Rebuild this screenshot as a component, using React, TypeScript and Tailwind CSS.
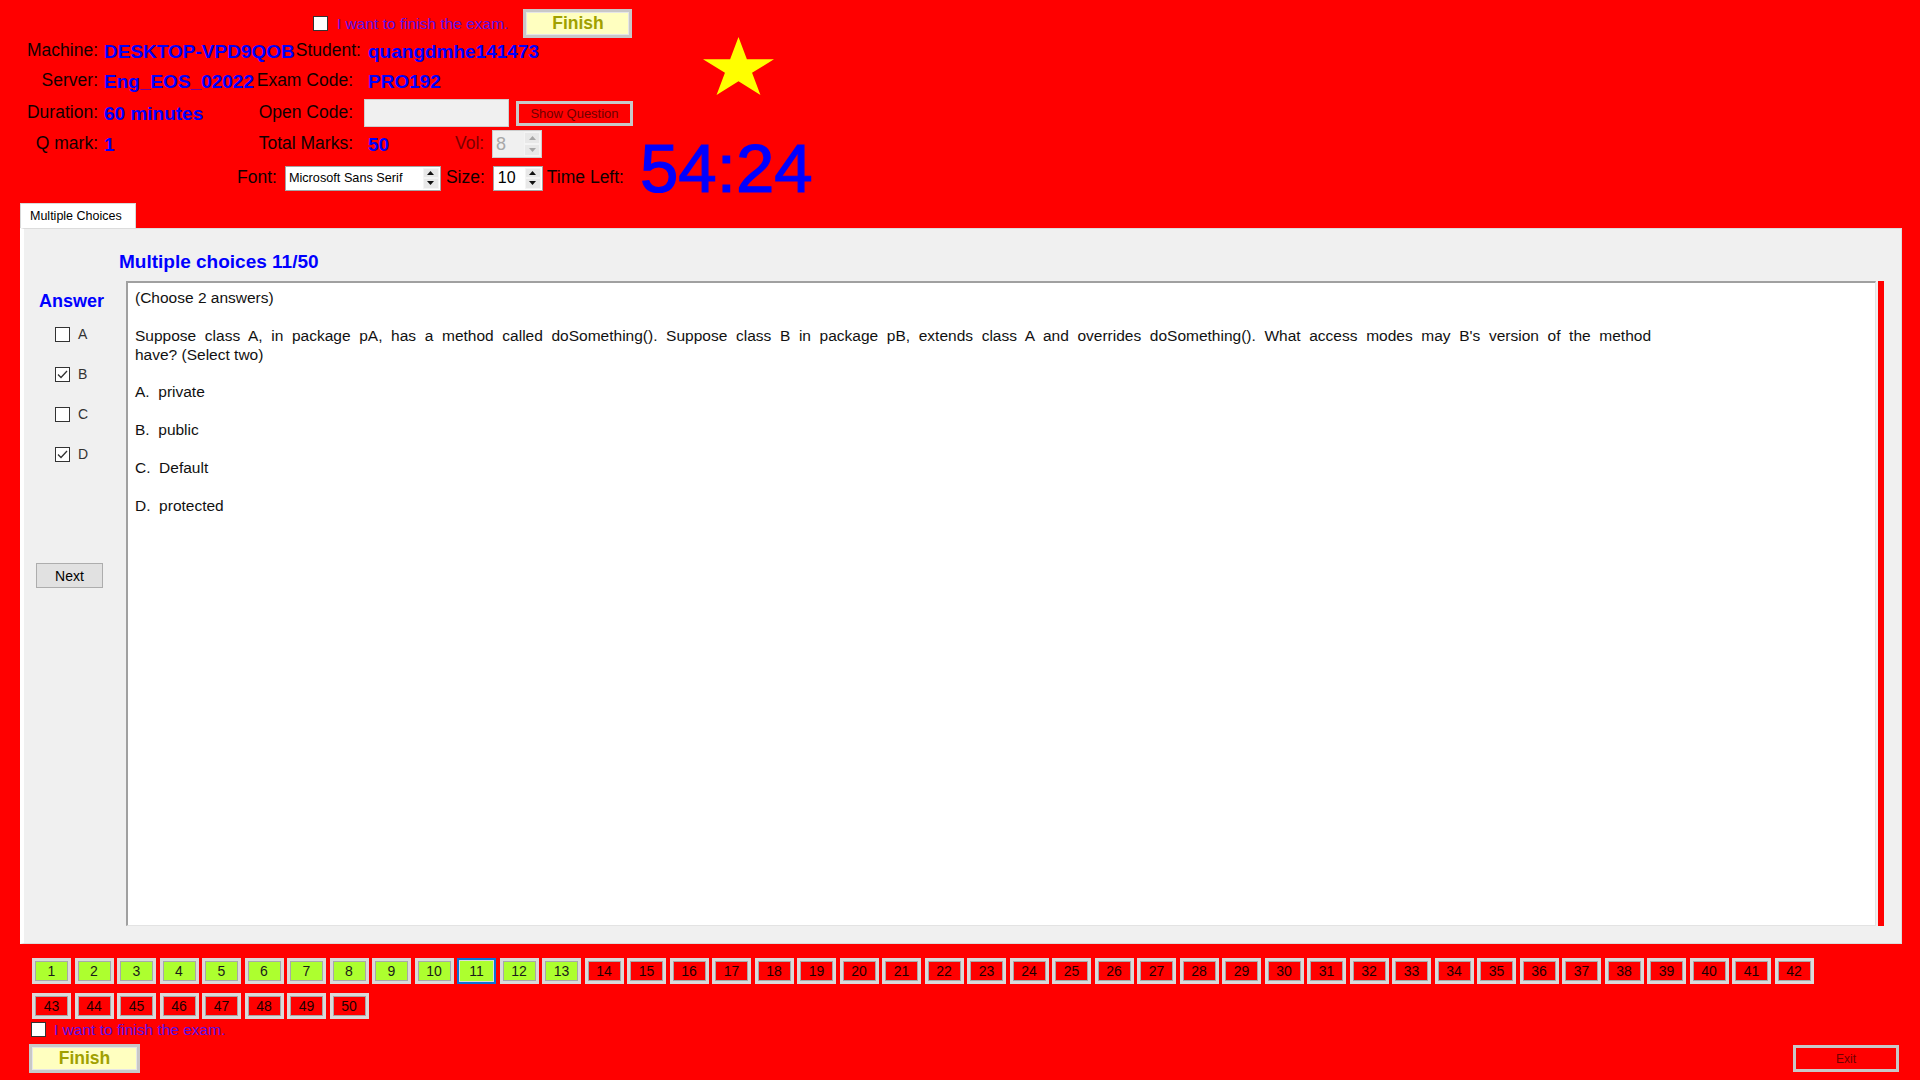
import React from "react";

const Check = ({ checked }: { checked?: boolean }) => (
  <div className="w-[15px] h-[15px] bg-white border border-[#333333] flex items-center justify-center shrink-0">
    {checked && (
      <svg width="11" height="9" viewBox="0 0 11 9">
        <path d="M1 4.5 L4 7.5 L10 1" fill="none" stroke="#333333" strokeWidth="1.3" />
      </svg>
    )}
  </div>
);

const Arrows = ({ disabled }: { disabled?: boolean }) => (
  <div className="flex flex-col w-[17px] h-full py-[1px] pr-[1px]">
    <div className="flex-1 flex items-center justify-center bg-[#e8e8e8] border border-[#f4f4f4]">
      <svg width="7" height="4" viewBox="0 0 7 4">
        <path d="M0 4 L3.5 0 L7 4Z" fill={disabled ? "#a6a6a6" : "#111111"} />
      </svg>
    </div>
    <div className="flex-1 flex items-center justify-center bg-[#e8e8e8] border border-[#f4f4f4]">
      <svg width="7" height="4" viewBox="0 0 7 4">
        <path d="M0 0 L3.5 4 L7 0Z" fill={disabled ? "#a6a6a6" : "#111111"} />
      </svg>
    </div>
  </div>
);

const Label = ({ children, cls }: { children: React.ReactNode; cls: string }) => (
  <span className={cls}>{children}</span>
);

export default function App() {
  const nums = Array.from({ length: 50 }, (_, i) => i + 1);
  const row1 = nums.slice(0, 42);
  const row2 = nums.slice(42);

  const NumBtn = ({ n }: { n: number }) => {
    const done = n <= 13;
    const current = n === 11;
    return (
      <div
        className={
          current
            ? "w-[39px] h-[26px] shrink-0 border-2 border-[#0a72d8] shadow-[inset_0_0_0_1px_#dcdcdc] bg-[#adff2f] flex items-center justify-center text-[14px] text-[#1a1a1a]"
            : done
            ? "w-[39px] h-[26px] shrink-0 border-[3px] border-[#dadada] shadow-[inset_0_0_0_1px_#a8a8a8] bg-[#adff2f] flex items-center justify-center text-[14px] text-[#1a1a1a]"
            : "w-[39px] h-[26px] shrink-0 border-[3px] border-[#dadada] shadow-[inset_0_0_0_1px_#a8a8a8] bg-[#ff0000] flex items-center justify-center text-[14px] text-[#1a0000]"
        }
      >
        {n}
      </div>
    );
  };

  const lbl = "text-[17.5px] text-[#100000] whitespace-nowrap";
  const val = "text-[19px] font-bold text-[#0000ff] whitespace-nowrap";

  return (
    <div className="w-[1920px] h-[1080px] bg-[#ff0000] overflow-hidden font-['Liberation_Sans',Arial,sans-serif] leading-none">
      {/* Header */}
      <div className="flex h-[203px]">
        <div className="w-[640px] pt-[9px] flex flex-col">
          {/* row 0 */}
          <div className="h-[29px] flex items-center pl-[313px]">
            <Check />
            <span className="ml-[9px] text-[15.5px] text-[#5a10e8] whitespace-nowrap">I want to finish the exam.</span>
            <div className="ml-[15px] w-[109px] h-[29px] border-[3px] border-[#c8c8c8] shadow-[inset_0_0_0_1px_#e6e6e6] bg-[#ffffc0] flex items-center justify-center text-[17.5px] font-bold text-[#a0a000]">
              Finish
            </div>
          </div>
          {/* row 1 */}
          <div className="h-[26px] flex items-center">
            <Label cls={`${lbl} w-[98px] text-right`}>Machine:</Label>
            <span className={`${val} ml-[6px] w-[150px]`}>DESKTOP-VPD9QOB</span>
            <Label cls={`${lbl} w-[107px] text-right`}>Student:</Label>
            <span className={`${val} ml-[7px]`}>quangdmhe141473</span>
          </div>
          {/* row 2 */}
          <div className="h-[34px] flex items-center">
            <Label cls={`${lbl} w-[98px] text-right`}>Server:</Label>
            <span className={`${val} ml-[6px] w-[150px]`}>Eng_EOS_02022</span>
            <Label cls={`${lbl} w-[99px] text-right`}>Exam Code:</Label>
            <span className={`${val} ml-[15px]`}>PRO192</span>
          </div>
          {/* row 3 */}
          <div className="h-[30px] flex items-center">
            <Label cls={`${lbl} w-[98px] text-right`}>Duration:</Label>
            <span className={`${val} ml-[6px] w-[150px]`}>60 minutes</span>
            <Label cls={`${lbl} w-[99px] text-right`}>Open Code:</Label>
            <div className="ml-[11px] w-[145px] h-[28px] bg-[#f0f0f0] border border-[#cfcfcf]" />
            <div className="ml-[7px] w-[117px] h-[25px] border-[3px] border-[#c8c8c8] bg-[#ff0000] flex items-center justify-center text-[13px] text-[#6e0000] whitespace-nowrap">
              Show Question
            </div>
          </div>
          {/* row 4 */}
          <div className="h-[32px] flex items-center">
            <Label cls={`${lbl} w-[98px] text-right`}>Q mark:</Label>
            <span className={`${val} ml-[6px] w-[150px]`}>1</span>
            <Label cls={`${lbl} w-[99px] text-right`}>Total Marks:</Label>
            <span className={`${val} ml-[15px] w-[87px]`}>50</span>
            <span className="text-[17.5px] text-[#7a0000] w-[28px] whitespace-nowrap">Vol:</span>
            <div className="ml-[9px] w-[50px] h-[28px] bg-[#f0f0f0] border border-[#cccccc] flex items-center">
              <span className="flex-1 pl-[3px] text-[18px] text-[#a8a8a8]">8</span>
              <Arrows disabled />
            </div>
          </div>
          {/* row 5 */}
          <div className="h-[36px] flex items-center pl-[237px]">
            <span className={lbl}>Font:</span>
            <div className="ml-[8px] w-[156px] h-[25px] bg-white border border-[#a5a5a5] flex items-center">
              <span className="flex-1 pl-[3px] text-[12.7px] text-black whitespace-nowrap overflow-hidden">Microsoft Sans Serif</span>
              <Arrows />
            </div>
            <span className={`${lbl} ml-[5px]`}>Size:</span>
            <div className="ml-[8px] w-[50px] h-[25px] bg-white border border-[#a5a5a5] flex items-center">
              <span className="flex-1 pl-[4px] text-[16px] text-black">10</span>
              <Arrows />
            </div>
            <span className={`${lbl} ml-[4px]`}>Time Left:</span>
          </div>
        </div>
        <div className="flex flex-col pt-[37px]">
          <svg className="ml-[63px]" width="71" height="59" viewBox="0 0 190.2 180.9" preserveAspectRatio="none">
            <polygon
              points="95.1,0 117.55,69.1 190.2,69.1 131.4,111.8 153.9,180.9 95.1,138.2 36.3,180.9 58.8,111.8 0,69.1 72.65,69.1"
              fill="#ffff00"
            />
          </svg>
          <div className="mt-[39px] text-[69px] leading-[69px] text-[#0000ff] [-webkit-text-stroke:1.2px_#0000ff] whitespace-nowrap">
            54:24
          </div>
        </div>
      </div>

      {/* Tab control */}
      <div className="ml-[20px] w-[1882px]">
        <div className="w-[116px] h-[25px] bg-white border border-b-0 border-[#d9d9d9] flex items-center pl-[9px] text-[12.5px] text-black whitespace-nowrap">
          Multiple Choices
        </div>
        <div className="h-[716px] bg-[#f0f0f0] border border-[#dcdcdc] border-l-[4px] border-l-white flex flex-col">
          <div className="pt-[23px] pl-[95px] h-[52px] text-[19px] leading-[20px] font-bold text-[#0000ff] whitespace-nowrap">
            Multiple choices 11/50
          </div>
          <div className="flex h-[645px]">
            <div className="w-[102px] shrink-0 flex flex-col">
              <div className="pt-[9px] pl-[15px] text-[18px] leading-[22px] font-bold text-[#0000ff]">Answer</div>
              <div className="mt-[2px] flex flex-col">
                {[
                  ["A", false],
                  ["B", true],
                  ["C", false],
                  ["D", true],
                ].map(([l, c]) => (
                  <div key={l as string} className="h-[40px] flex items-center pl-[31px]">
                    <Check checked={c as boolean} />
                    <span className="ml-[8px] text-[14px] text-[#333333]">{l as string}</span>
                  </div>
                ))}
              </div>
              <div className="mt-[89px] ml-[12px] w-[67px] h-[25px] bg-[#e1e1e1] border border-[#adadad] flex items-center justify-center text-[14px] text-black">
                Next
              </div>
            </div>
            <div className="w-[1750px] h-[645px] bg-white border-t-2 border-l-2 border-t-[#a0a0a0] border-l-[#a0a0a0] border-r border-b border-r-[#e3e3e3] border-b-[#e3e3e3] pl-[7px] pt-[5.5px] text-[15.5px] leading-[18.75px] text-[#111111]">
              <p>(Choose 2 answers)</p>
              <p className="mt-[19.5px] w-[1516px] text-justify [text-align-last:justify]">
                Suppose class A, in package pA, has a method called doSomething(). Suppose class B in package pB, extends class A and overrides doSomething(). What access modes may B's version of the method
              </p>
              <p>have? (Select two)</p>
              <p className="mt-[19px] whitespace-pre">A.  private</p>
              <p className="mt-[19px] whitespace-pre">B.  public</p>
              <p className="mt-[19px] whitespace-pre">C.  Default</p>
              <p className="mt-[19px] whitespace-pre">D.  protected</p>
            </div>
            <div className="ml-[2px] w-[6px] h-[645px] bg-[#ff0000]" />
          </div>
        </div>
      </div>

      {/* Question buttons */}
      <div className="pl-[32px] pt-[14px] flex flex-col">
        <div className="flex gap-[3.5px]">
          {row1.map((n) => (
            <NumBtn key={n} n={n} />
          ))}
        </div>
        <div className="mt-[9px] flex gap-[3.5px]">
          {row2.map((n) => (
            <NumBtn key={n} n={n} />
          ))}
        </div>
        <div className="mt-[3px] -ml-[1px] h-[15px] flex items-center">
          <Check />
          <span className="ml-[8px] text-[15.5px] text-[#5a10e8] whitespace-nowrap">I want to finish the exam.</span>
        </div>
      </div>
      <div className="mt-[7px] pl-[29px] pr-[21px] flex justify-between items-start">
        <div className="w-[111px] h-[29px] border-[3px] border-[#c8c8c8] shadow-[inset_0_0_0_1px_#e6e6e6] bg-[#ffffc0] flex items-center justify-center text-[17.5px] font-bold text-[#a0a000]">
          Finish
        </div>
        <div className="mt-[1px] w-[106px] h-[27px] border-[3px] border-[#c8c8c8] bg-[#ff0000] flex items-center justify-center text-[12px] text-[#6e0000]">
          Exit
        </div>
      </div>
    </div>
  );
}
